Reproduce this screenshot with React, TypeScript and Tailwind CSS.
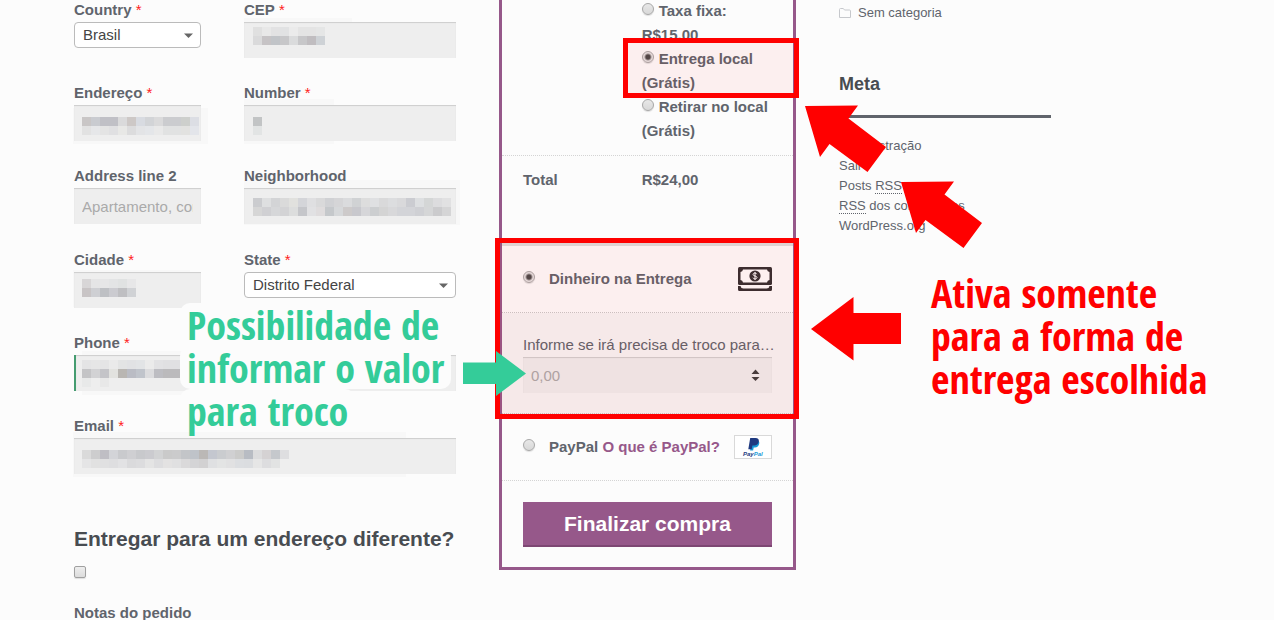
import React from "react";

type Smear = [number, number, number, number];

interface MosaicProps {
  x: number;
  y: number;
  rows: string[];
}

const CELL = 9;

/* Pixelated cover for private values; every row is a list of hex colours. */
function Mosaic({ x, y, rows }: MosaicProps) {
  return (
    <svg className="pointer-events-none absolute inset-0 h-full w-full" aria-hidden="true" shapeRendering="crispEdges">
      {rows.map((row, r) =>
        row.split(" ").map((c, i) => (
          <rect key={r + "-" + i} x={x + i * CELL} y={y + r * CELL} width={CELL} height={CELL} fill={"#" + c} />
        ))
      )}
    </svg>
  );
}

interface FieldProps {
  id: string;
  label: string;
  required?: boolean;
  className?: string;
  placeholder?: string;
  valid?: boolean;
  smear?: Smear;
  mosaic?: MosaicProps;
}

function Label({ id, label, required }: { id: string; label: string; required?: boolean }) {
  return (
    <label htmlFor={id} className="relative z-10 block h-6 leading-6 font-bold whitespace-nowrap">
      {label}
      {required && <span className="font-normal text-[#ff2020]"> *</span>}
    </label>
  );
}

const inputClass =
  "relative block h-9 w-full bg-[#eeeeee] px-2 text-[15px] text-[#43454b] shadow-[inset_0_1px_1px_rgba(0,0,0,0.14)] outline-none placeholder:text-[#aaaaaa]";

function Field({ id, label, required, className = "", placeholder, valid, smear, mosaic }: FieldProps) {
  return (
    <div className={className}>
      <Label id={id} label={label} required={required} />
      <div className="relative">
        {smear && (
          <svg className="pointer-events-none absolute inset-0 h-full w-full overflow-visible" aria-hidden="true">
            <rect x={smear[0]} y={smear[1]} width={smear[2]} height={smear[3]} fill="#f8f8f8" />
          </svg>
        )}
        <input
          id={id}
          type="text"
          placeholder={placeholder}
          className={valid ? inputClass + " border-l-2 border-[#459c70]" : inputClass}
        />
        {mosaic && <Mosaic {...mosaic} />}
      </div>
    </div>
  );
}

function SelectField({ id, label, option }: { id: string; label: string; option: string }) {
  return (
    <div>
      <Label id={id} label={label} required />
      <div className="relative">
        <select
          id={id}
          className="block h-[26px] w-full appearance-none rounded border border-[#bbbbbb] bg-white px-2 text-[15px] text-[#444444]"
        >
          <option>{option}</option>
        </select>
        <svg className="pointer-events-none absolute top-[11px] right-2 h-[5px] w-[9px]" viewBox="0 0 9 5" aria-hidden="true">
          <path d="M0 0.5h9L4.5 5z" fill="#666" />
        </svg>
      </div>
    </div>
  );
}

const radioClass =
  "size-3 shrink-0 appearance-none rounded-full border border-[#a8a8a8] bg-linear-to-b from-[#e8e8e8] to-[#d8d8d8] shadow-[0_1px_1px_rgba(0,0,0,0.12)] checked:bg-[radial-gradient(circle,#4a4a4a_0_2px,#e4e4e4_4px)]";

function Shipping({ id, text, checked, marked }: { id: string; text: string; checked?: boolean; marked?: boolean }) {
  return (
    <li className="relative">
      <input
        id={id}
        type="radio"
        name="shipping"
        defaultChecked={checked}
        className={radioClass + " mr-[5px] inline-block align-[1px]"}
      />
      <label htmlFor={id}>{text}</label>
      {marked && (
        <div className="pointer-events-none absolute -top-[9px] -right-[27px] -bottom-[3px] -left-[19px] border-5 border-[#ff0000] bg-[#ff0000]/5" />
      )}
    </li>
  );
}

function CashIcon() {
  return (
    <svg className="h-6 w-[34px]" viewBox="0 0 34 24" role="img" aria-label="Dinheiro">
      <rect width="34" height="18" rx="1.500" fill="#332f31" />
      <path d="M5 2.500h24a3 3 0 0 0 2.500 2.500v8a3 3 0 0 0-2.500 2.500H5A3 3 0 0 0 2.500 13V5A3 3 0 0 0 5 2.500z" fill="#fdfdfd" />
      <circle cx="17" cy="9" r="5.600" fill="#332f31" />
      <path d="M18.800 7.200c-.3-.8-1-1.200-1.800-1.200-1.100 0-1.900.6-1.900 1.500 0 2 3.900 1 3.900 3 0 .9-.9 1.500-2 1.500-1 0-1.700-.5-2-1.300M17 5v8" fill="none" stroke="#fdfdfd" strokeWidth="1" />
      <path d="M0 19h2.500a3 3 0 0 0 3 2.500h23a3 3 0 0 0 3-2.500H34v3.500a1.500 1.500 0 0 1-1.500 1.500h-31A1.500 1.500 0 0 1 0 22.500z" fill="#332f31" />
    </svg>
  );
}

function PayPalLogo() {
  return (
    <svg className="h-6 w-[38px] border border-[#d9d9d9] bg-white" viewBox="0 0 36 22" role="img" aria-label="PayPal">
      <path d="M16.500 4.500h5c2.500 0 3.100 1.300 2.700 3.300-.5 2.500-2 3.600-4.300 3.600h-1.200l-.6 3.100h-3z" fill="#179bd7" />
      <path d="M15.200 2h5.300c2.600 0 3.700 1.300 3.300 3.500-.5 2.700-2.200 4-4.700 4h-1.700l-.7 3.800h-3.400z" fill="#1f3a80" />
      <text x="8" y="20" fontSize="6" fontWeight="bold" fontStyle="italic" fontFamily="Liberation Sans, sans-serif" fill="#253b80">
        Pay<tspan fill="#179bd7">Pal</tspan>
      </text>
    </svg>
  );
}

function BillingForm() {
  return (
    <form className="-mt-[2px]">
      <div className="flex flex-col gap-6">
        <div className="grid grid-cols-[minmax(0,127fr)_minmax(0,212fr)] gap-x-[43px] gap-y-[23px]">
          <SelectField id="country" label="Country" option="Brasil" />
          <Field
            id="cep"
            label="CEP"
            required
            smear={[0, -4, 108, 20]}
            mosaic={{
              x: 9,
              y: 5,
              rows: [
                "e0e0e0 e8e8e8 e2e2e3 e1e2e3 ebebeb e4e4e4 e4e4e4 e5e6e6",
                "dadadb c6c3c5 c1c4c8 c7c7c9 dadbdc c7c7c9 c0bdc0 ced2d6",
              ],
            }}
          />
          <Field
            id="street"
            label="Endereço"
            required
            smear={[-1, 3, 135, 36]}
            mosaic={{
              x: 8,
              y: 12,
              rows: [
                "c9c6c6 c9cbd0 c0c0c6 c0c0c6 dadadb cdc8c6 d8dbe1 d2d4d7 dadadb cbcccf cbcccf cdcfcc dcdee4",
                "e2e2e2 e6e7e9 e4e4e4 e0e0e2 e8e8e6 dcdcdd e3e4e6 e4e6e9 e9e9e9 e1e2e2 e1e2e2 e2e2e0 e3e5ea",
              ],
            }}
          />
          <Field
            id="number"
            label="Number"
            required
            smear={[0, -6, 90, 45]}
            mosaic={{ x: 9, y: 12, rows: ["c2c4c5", "e2e4e4"] }}
          />
          <Field id="address2" label="Address line 2" placeholder="Apartamento, complemento, etc." />
          <Field
            id="neighborhood"
            label="Neighborhood"
            smear={[0, -8, 216, 45]}
            mosaic={{
              x: 9,
              y: 10,
              rows: [
                "cbcccf dedfe0 d3d4d6 dadada e1e1de d4d5d9 dfdfe1 d9d9da d0d1d4 d5d5d7 dadbdd d0d2d4 dddddd dfe0e2 d9d9da dcdddf d9d9db cbccd1 dddfe1 d4d6d6 dcdcde e1e1e2",
                "d6d6d6 d0d0d3 d6d7d9 d3d3d5 dcdddd c5c6ca e1e1e3 dfdcdd c5c8cb d6d8da cdcaca c8c8cd d6d6d9 ccced0 d4d4d4 d8d8da d3d4d8 d3d4d8 cfd0d4 d5d6d7 cbcbcd d5d5d6",
              ],
            }}
          />
        </div>
        <div className="grid grid-cols-[minmax(0,127fr)_minmax(0,212fr)] gap-x-[43px] gap-y-[23px]">
          <Field
            id="city"
            label="Cidade"
            required
            smear={[-1, -2, 117, 37]}
            mosaic={{
              x: 8,
              y: 7,
              rows: ["d8d6d7 e5e5e6 e6e6e7 e3e4e5 e0e2e2 e7e7e8", "c8c4c5 cecfd3 bec0c4 cbcbd0 bfbfc2 d0d2d5"],
            }}
          />
          <SelectField id="state" label="State" option="Distrito Federal" />
          <Field
            id="phone"
            className="col-span-2"
            label="Phone"
            required
            valid
            smear={[8, -4, 150, 44]}
            mosaic={{
              x: 8,
              y: 5,
              rows: [
                "e4e4e5 e6e6e6 e4e4e5 eaeaea e3e4e4 e1e2e4 e2e4e6 ebebeb e2e2e4 e0e0e2 e0e0e2 e3e3e4",
                "c4c4c6 d2d2d4 c4c4c8 e2e2df b9b6b2 babcc4 c0c4cb dcdcde bdbdc2 bbbabc bbbabc bbbabc",
                "e8e9e9 eeeeee e8e8e8",
              ],
            }}
          />
          <Field
            id="email"
            className="col-span-2"
            label="Email"
            required
            smear={[-1, -6, 333, 45]}
            mosaic={{
              x: 8,
              y: 12,
              rows: [
                "dadada cdcdce bfbec4 d3d4d8 c9cacd cfcfd2 c8c9cc cbcbcf d2d3d4 cacaca cbcbcc c3c5c8 bfc3c9 bbb8b6 c4c7cf cacccf d0d0d2 cbcbca b8bcc3 dcdcdd d5d2d3 c5c8cc dedee0",
                "e5e5e6 e1e1e1 e0e0e1 dedee0 e2e2e4 dadadc dcdcde e4e4e4 dddddf e3e2e2 e0e0e1 dad9da d4d4d6 d2d1d2 dfe0e2 e3e4e4 e1e1e2 dcdee1 dbdde0 e6e6e6 dddddf e2e3e3",
              ],
            }}
          />
        </div>
      </div>
      <h3 className="mt-[50px] text-[21px] leading-[30px] font-bold whitespace-nowrap text-[#484c51]">
        <label htmlFor="ship-different">Entregar para um endereço diferente?</label>
      </h3>
      <input
        id="ship-different"
        type="checkbox"
        className="mt-3 block size-3 appearance-none rounded-[2px] border border-[#a0a0a0] bg-linear-to-b from-[#eeeeee] to-[#dcdcdc] shadow-[0_1px_1px_rgba(0,0,0,0.12)]"
      />
      <label htmlFor="notes" className="mt-[23px] block leading-6 font-bold">
        Notas do pedido
      </label>
      <textarea id="notes" className="block h-20 w-full resize-none bg-[#eeeeee]" />
    </form>
  );
}

function OrderReview() {
  return (
    <form className="-mt-1 border-3 border-[#96588a] pb-5">
      <table className="w-full table-fixed border-collapse text-left font-bold">
        <tbody>
          <tr className="border-b border-dotted border-[#d4d4d4]">
            <th className="w-[48%] pl-[21px]" />
            <td className="pr-[21px] pb-3 leading-6">
              <ul>
                <Shipping id="flat" text="Taxa fixa: R$15,00" />
                <Shipping id="local" text="Entrega local (Grátis)" checked marked />
                <Shipping id="pickup" text="Retirar no local (Grátis)" />
              </ul>
            </td>
          </tr>
          <tr>
            <th className="py-3 pl-[21px] leading-6">Total</th>
            <td className="py-3 pr-[21px] leading-6">R$24,00</td>
          </tr>
        </tbody>
      </table>
      <div className="mt-[39px] border-t-3 border-[#dddddd]">
        <div className="relative">
          <div className="flex h-[67px] items-center border-b border-dotted border-[#c8c8c8] px-[21px]">
            <input id="cash" type="radio" name="payment" defaultChecked className={radioClass + " mb-1"} />
            <label htmlFor="cash" className="ml-[14px] grow font-bold">
              Dinheiro na Entrega
            </label>
            <CashIcon />
          </div>
          <div className="border-b border-dotted border-[#c8c8c8] bg-[#f5f5f5] px-[21px] py-5">
            <label htmlFor="change" className="block leading-6 whitespace-nowrap">
              Informe se irá precisa de troco para…
            </label>
            <div className="relative">
              <input id="change" type="text" inputMode="decimal" placeholder="0,00" className={inputClass} />
              <svg className="pointer-events-none absolute top-3 right-3 h-3 w-[9px]" viewBox="0 0 9 12" aria-hidden="true">
                <path d="M0.500 5L4.500 0.500l4 4.500zM0.500 8h8l-4 4z" fill="#3f3f3f" />
              </svg>
            </div>
          </div>
          <div className="pointer-events-none absolute -top-2 -right-[6px] -bottom-[5px] -left-[7px] border-5 border-[#ff0000] bg-[#ff0000]/5" />
        </div>
        <div className="flex h-[67px] items-center border-b border-dotted border-[#d4d4d4] px-[21px]">
          <input id="paypal" type="radio" name="payment" className={radioClass + " mb-1"} />
          <span className="ml-[14px] grow font-bold whitespace-nowrap">
            <label htmlFor="paypal">PayPal</label>{" "}
            <a href="#paypal" className="text-[#96588a]">
              O que é PayPal?
            </a>
          </span>
          <PayPalLogo />
        </div>
      </div>
      <div className="px-[21px] pt-[21px]">
        <button
          type="button"
          className="h-[45px] w-full border-b-2 border-[#7d4773] bg-[#96588a] text-[21px] font-bold text-white"
        >
          Finalizar compra
        </button>
      </div>
    </form>
  );
}

function Sidebar() {
  return (
    <aside className="pt-[3px] text-[13px] leading-5">
      <a href="#sem-categoria" className="flex items-center gap-[7px]">
        <svg className="h-[10px] w-3" viewBox="0 0 12 10" aria-hidden="true">
          <path d="M0.500 9.500V1.500a1 1 0 0 1 1-1h2.800l1.200 1.500h5a1 1 0 0 1 1 1v6.500z" fill="none" stroke="#c6c8cc" />
        </svg>
        Sem categoria
      </a>
      <h2 className="mt-[49px] border-b-3 border-[#60646c] pb-[19px] text-lg leading-6 font-bold text-[#484c51]">Meta</h2>
      <ul className="mt-[18px]">
        <li><a href="#admin">Administração</a></li>
        <li><a href="#sair">Sair</a></li>
        <li>
          <a href="#posts">
            Posts <abbr className="border-b border-dotted border-[#60646c] no-underline">RSS</abbr>
          </a>
        </li>
        <li>
          <a href="#comentarios">
            <abbr className="border-b border-dotted border-[#60646c] no-underline">RSS</abbr> dos comentários
          </a>
        </li>
        <li><a href="#wordpress">WordPress.org</a></li>
      </ul>
    </aside>
  );
}

function Annotations() {
  return (
    <div className="pointer-events-none absolute inset-0 z-20 font-['Open_Sans_Condensed','Noto_Sans_Condensed','Lato',sans-serif] text-[40px] leading-[43px] font-bold whitespace-nowrap">
      <p className="absolute top-[303px] left-[180px] text-[#34cc99]">
        {["Possibilidade de", "informar o valor", "para troco"].map((line) => (
          <span key={line} className="block w-fit rounded-[10px] bg-[#fcfcfc] px-[7px]">
            {line}
          </span>
        ))}
      </p>
      <p className="absolute top-[271px] left-[931px] text-[#ff0000]">
        Ativa somente
        <br />
        para a forma de
        <br />
        entrega escolhida
      </p>
      <svg className="absolute top-0 left-0 h-[620px] w-[1274px]" viewBox="0 0 1274 620" aria-hidden="true">
        <path d="M463 362.500H496V351L526 373.500L496 396V384H463z" fill="#34cc99" />
        <g fill="#ff0000">
          <path d="M811 329L853.500 297V313H901V344H853.500V360.500z" />
          <path d="M805 106L858 105.500L848.500 118.500L886 147L867.500 172L829.500 144L820 157z" />
          <path d="M901 182L954 181.500L944.500 194.500L982 223L963.500 248L925.500 220L916 233z" />
        </g>
      </svg>
    </div>
  );
}

export default function App() {
  return (
    <div className="relative h-screen overflow-hidden bg-[#fcfcfc] font-['Liberation_Sans',Arial,sans-serif] text-[15px] text-[#60646c]">
      <main className="grid grid-cols-[minmax(0,382fr)_minmax(0,297fr)_minmax(0,212fr)] items-start gap-[43px] pr-[223px] pl-[74px]">
        <BillingForm />
        <OrderReview />
        <Sidebar />
      </main>
      <Annotations />
    </div>
  );
}
